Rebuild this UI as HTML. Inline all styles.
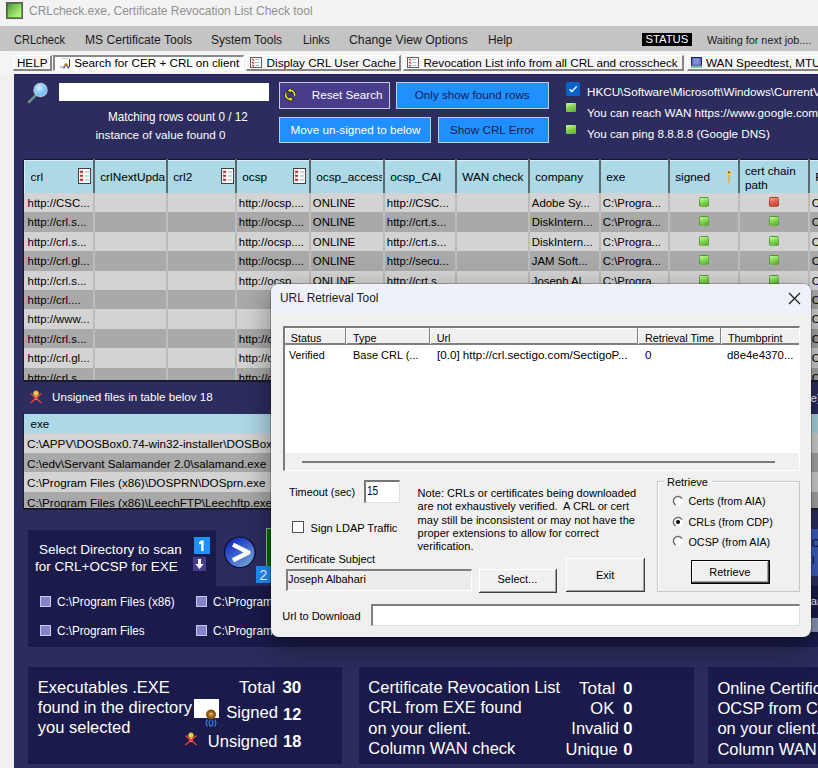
<!DOCTYPE html><html><head><meta charset="utf-8"><style>
html,body{margin:0;padding:0;width:818px;height:768px;overflow:hidden;background:#f0f0f0;position:relative;font-family:"Liberation Sans", sans-serif}
.t{position:absolute;white-space:pre;}
.b{position:absolute;}
</style></head><body>
<div class="b" style="left:0px;top:0px;width:818px;height:26px;background:#f3f3f3"></div>
<div class="b" style="left:6px;top:2px;width:17px;height:17px;background:linear-gradient(135deg,#4a8a38 0%,#7cc858 40%,#a8f070 75%,#b8f880 100%);border:1px solid #5a5a5a;box-shadow:inset 0 0 0 1px rgba(40,80,30,0.5);box-sizing:border-box"></div>
<div class="t" style="left:29.3px;top:5.02px;font-size:12.5px;line-height:12.5px;color:#909090;transform:scaleX(0.9582);transform-origin:0 0;">CRLcheck.exe, Certificate Revocation List Check tool</div>
<div class="b" style="left:0px;top:26px;width:818px;height:25px;background:#c4c4c4"></div>
<div class="t" style="left:14.0px;top:33.84px;font-size:12px;line-height:12px;color:#1a1a1a;transform:scaleX(0.9213);transform-origin:0 0;">CRLcheck</div>
<div class="t" style="left:84.9px;top:33.84px;font-size:12px;line-height:12px;color:#1a1a1a;transform:scaleX(1.0058);transform-origin:0 0;">MS Certificate Tools</div>
<div class="t" style="left:211.4px;top:33.84px;font-size:12px;line-height:12px;color:#1a1a1a;transform:scaleX(0.9995);transform-origin:0 0;">System Tools</div>
<div class="t" style="left:302.8px;top:33.84px;font-size:12px;line-height:12px;color:#1a1a1a;transform:scaleX(0.9531);transform-origin:0 0;">Links</div>
<div class="t" style="left:349.0px;top:33.84px;font-size:12px;line-height:12px;color:#1a1a1a;transform:scaleX(1.0237);transform-origin:0 0;">Change View Options</div>
<div class="t" style="left:488.2px;top:33.84px;font-size:12px;line-height:12px;color:#1a1a1a;transform:scaleX(0.9927);transform-origin:0 0;">Help</div>
<div class="b" style="left:642px;top:33px;width:50px;height:13px;background:#000"></div>
<div class="t" style="left:645.4px;top:34.43px;font-size:11.3px;line-height:11.3px;color:#fff;">STATUS</div>
<div class="t" style="left:706.9px;top:33.78px;font-size:11.6px;line-height:11.6px;color:#1a1a1a;transform:scaleX(0.9342);transform-origin:0 0;">Waiting for next job....</div>
<div class="b" style="left:0px;top:51px;width:818px;height:23px;background:#f4f4f4"></div>
<div class="b" style="left:13px;top:55px;width:39px;height:16px;background:#f6f6f6;border-top:1px solid #fff;border-left:1px solid #fff;border-right:2px solid #858585;border-bottom:2px solid #858585;box-sizing:border-box"></div>
<div class="t" style="left:16.9px;top:56.70px;font-size:11.7px;line-height:11.7px;color:#000;">HELP</div>
<div class="b" style="left:53px;top:55px;width:191px;height:16px;background:#fdfdfd;border-top:2px solid #8a8a8a;border-left:2px solid #8a8a8a;border-right:1px solid #fff;border-bottom:1px solid #fff;box-sizing:border-box"></div>
<div class="t" style="left:74.3px;top:56.70px;font-size:11.7px;line-height:11.7px;color:#000;">Search for CER + CRL on client</div>
<svg class="b" style="left:59px;top:57px" width="12" height="12" viewBox="0 0 12 12"><path d="M1 10h5" stroke="#a0a0a0" stroke-width="1.2"/><path d="M10.5 2v8h-2" fill="none" stroke="#404040" stroke-width="1"/><path d="M3 1.5h6" stroke="#d0d0d0"/><circle cx="7" cy="8" r="1.8" fill="#b07020"/><path d="M5.5 9.5l-0.8 2M8.5 9.5l0.8 2" stroke="#2060d0" stroke-width="1.4"/></svg>
<div class="b" style="left:246px;top:55px;width:155px;height:16px;background:#f6f6f6;border-top:1px solid #fff;border-left:1px solid #fff;border-right:2px solid #858585;border-bottom:2px solid #858585;box-sizing:border-box"></div>
<div class="t" style="left:266.6px;top:56.70px;font-size:11.7px;line-height:11.7px;color:#000;">Display CRL User Cache</div>
<div class="b" style="left:403px;top:55px;width:281px;height:16px;background:#f6f6f6;border-top:1px solid #fff;border-left:1px solid #fff;border-right:2px solid #858585;border-bottom:2px solid #858585;box-sizing:border-box"></div>
<div class="t" style="left:423.4px;top:56.70px;font-size:11.7px;line-height:11.7px;color:#000;">Revocation List info from all CRL and crosscheck</div>
<svg class="b" style="left:250px;top:57px" width="12" height="11" viewBox="0 0 12 11"><rect x="0.5" y="0.5" width="11" height="10" fill="#fff" stroke="#606060"/><path d="M2 2l2 1.5M2 5l2 1.5M2 8l2 1.5" stroke="#e03030" stroke-width="1.4"/><path d="M5.5 2.5h4M5.5 5.5h4M5.5 8.5h4" stroke="#90c0d0"/></svg>
<svg class="b" style="left:407px;top:57px" width="12" height="11" viewBox="0 0 12 11"><rect x="0.5" y="0.5" width="11" height="10" fill="#fff" stroke="#606060"/><path d="M2 2l2 1.5M2 5l2 1.5M2 8l2 1.5" stroke="#e03030" stroke-width="1.4"/><path d="M5.5 2.5h4M5.5 5.5h4M5.5 8.5h4" stroke="#90c0d0"/></svg>
<div class="b" style="left:687px;top:55px;width:143px;height:16px;background:#f6f6f6;border-top:1px solid #fff;border-left:1px solid #fff;border-right:2px solid #858585;border-bottom:2px solid #858585;box-sizing:border-box"></div>
<div class="t" style="left:706.0px;top:56.70px;font-size:11.7px;line-height:11.7px;color:#000;">WAN Speedtest, MTU</div>
<svg class="b" style="left:691px;top:57px" width="11" height="11" viewBox="0 0 11 11"><rect x="0.5" y="0.5" width="10" height="8" fill="#6070c0" stroke="#202060"/><rect x="2.5" y="1.5" width="6" height="6" fill="#8090d0"/><rect x="0" y="8.5" width="11" height="2.5" fill="#80c0b0"/></svg>
<div class="b" style="left:14px;top:73px;width:804px;height:695px;background:#2c2d5e;border-top:1px solid #20205a;box-sizing:border-box;top:73.5px"></div>
<svg class="b" style="left:26px;top:81px" width="24" height="24" viewBox="0 0 24 24"><defs><radialGradient id="mg" cx="0.4" cy="0.35" r="0.7"><stop offset="0" stop-color="#d8f0ff"/><stop offset="0.5" stop-color="#86cdfb"/><stop offset="1" stop-color="#6ab8f0"/></radialGradient></defs><line x1="3" y1="21" x2="10" y2="14" stroke="#6a8a90" stroke-width="2.6" stroke-linecap="round"/><circle cx="14.5" cy="9" r="6.6" fill="url(#mg)" stroke="#b8c8d0" stroke-width="1.2"/></svg>
<div class="b" style="left:59px;top:83px;width:210px;height:18px;background:#fff"></div>
<div class="t" style="left:108.0px;top:111.47px;font-size:12.2px;line-height:12.2px;color:#fff;transform:scaleX(0.9602);transform-origin:0 0;">Matching rows count 0 / 12</div>
<div class="t" style="left:95.5px;top:129.40px;font-size:11.7px;line-height:11.7px;color:#fff;">instance of value found 0</div>
<div class="b" style="left:279px;top:82px;width:111px;height:27px;background:#483d8b;border:1px solid #c8c8e0;box-sizing:border-box"></div>
<div class="t" style="left:311.8px;top:89.40px;font-size:11.7px;line-height:11.7px;color:#fff;">Reset Search</div>
<svg class="b" style="left:284px;top:88px" width="13" height="14" viewBox="0 0 13 14"><path d="M6 2.4A4.5 4.5 0 0 1 10.5 8.4M6.4 11.2A4.5 4.5 0 0 1 1.9 5.2" fill="none" stroke="#101010" stroke-width="3"/><path d="M3.6 2.4L6.9 0.2V4.6zM9 11.2L5.7 9V13.4z" fill="#101010" stroke="#101010" stroke-width="1.2"/><path d="M6 2.4A4.5 4.5 0 0 1 10.5 8.4M6.4 11.2A4.5 4.5 0 0 1 1.9 5.2" fill="none" stroke="#e8e020" stroke-width="1.7"/><path d="M3.6 2.4L6.9 0.2V4.6zM9 11.2L5.7 9V13.4z" fill="#e8e020" stroke="#e8e020" stroke-width="0"/></svg>
<div class="b" style="left:396px;top:82px;width:153px;height:27px;background:#1e90ff;border:1px solid #c8c8e0;box-sizing:border-box"></div>
<div class="t" style="left:414.7px;top:89.40px;font-size:11.7px;line-height:11.7px;color:#1a1a50;">Only show found rows</div>
<div class="b" style="left:279px;top:117px;width:152px;height:26px;background:#1e90ff;border:1px solid #c8c8e0;box-sizing:border-box"></div>
<div class="t" style="left:290.6px;top:124.40px;font-size:11.7px;line-height:11.7px;color:#fff;">Move un-signed to below</div>
<div class="b" style="left:438px;top:117px;width:111px;height:26px;background:#1e90ff;border:1px solid #c8c8e0;box-sizing:border-box"></div>
<div class="t" style="left:450.0px;top:124.40px;font-size:11.7px;line-height:11.7px;color:#1a1a50;">Show CRL Error</div>
<div class="b" style="left:566px;top:82px;width:14px;height:14px;background:#0a64c8;border-radius:2px"></div>
<svg class="b" style="left:566px;top:82px" width="14" height="14" viewBox="0 0 14 14"><path d="M3.5 7.2l2.3 2.3 4.8-5" fill="none" stroke="#fff" stroke-width="1.3"/></svg>
<div class="t" style="left:587.0px;top:86.40px;font-size:11.7px;line-height:11.7px;color:#fff;">HKCU\Software\Microsoft\Windows\CurrentVersion</div>
<div class="b" style="left:566px;top:103px;width:10px;height:9px;background:linear-gradient(160deg,#d0f8a0,#80d050 50%,#60b030);border-radius:1px;box-shadow:0 0 1px rgba(0,0,0,0.4)"></div>
<div class="t" style="left:587.0px;top:107.10px;font-size:11.7px;line-height:11.7px;color:#fff;">You can reach WAN https://www.google.com</div>
<div class="b" style="left:566px;top:125px;width:10px;height:9px;background:linear-gradient(160deg,#d0f8a0,#80d050 50%,#60b030);border-radius:1px;box-shadow:0 0 1px rgba(0,0,0,0.4)"></div>
<div class="t" style="left:587.0px;top:127.70px;font-size:11.7px;line-height:11.7px;color:#fff;">You can ping 8.8.8.8 (Google DNS)</div>
<div class="b" style="left:24px;top:159px;width:794px;height:222px;background:#d3d3d3"></div>
<div class="b" style="left:23px;top:159px;width:795px;height:1px;background:#151535"></div>
<div class="b" style="left:23px;top:159px;width:1px;height:222px;background:#151535"></div>
<div class="b" style="left:24px;top:160px;width:794px;height:33px;background:#add8e6;border-top:1px solid #d8f0f8;border-left:1px solid #d8f0f8;box-sizing:border-box"></div>
<div class="b" style="left:24px;top:212px;width:794px;height:20px;background:#a9a9a9"></div>
<div class="b" style="left:24px;top:251px;width:794px;height:20px;background:#a9a9a9"></div>
<div class="b" style="left:24px;top:290px;width:794px;height:19px;background:#a9a9a9"></div>
<div class="b" style="left:24px;top:329px;width:794px;height:19px;background:#a9a9a9"></div>
<div class="b" style="left:24px;top:368px;width:794px;height:13px;background:#a9a9a9"></div>
<div class="b" style="left:93px;top:159px;width:2px;height:34px;background:#5a6870"></div>
<div class="b" style="left:93px;top:193px;width:2px;height:188px;background:#bcbcbc"></div>
<div class="b" style="left:166px;top:159px;width:2px;height:34px;background:#5a6870"></div>
<div class="b" style="left:166px;top:193px;width:2px;height:188px;background:#bcbcbc"></div>
<div class="b" style="left:235px;top:159px;width:2px;height:34px;background:#5a6870"></div>
<div class="b" style="left:235px;top:193px;width:2px;height:188px;background:#bcbcbc"></div>
<div class="b" style="left:309px;top:159px;width:2px;height:34px;background:#5a6870"></div>
<div class="b" style="left:309px;top:193px;width:2px;height:188px;background:#bcbcbc"></div>
<div class="b" style="left:383px;top:159px;width:2px;height:34px;background:#5a6870"></div>
<div class="b" style="left:383px;top:193px;width:2px;height:188px;background:#bcbcbc"></div>
<div class="b" style="left:455px;top:159px;width:2px;height:34px;background:#5a6870"></div>
<div class="b" style="left:455px;top:193px;width:2px;height:188px;background:#bcbcbc"></div>
<div class="b" style="left:528px;top:159px;width:2px;height:34px;background:#5a6870"></div>
<div class="b" style="left:528px;top:193px;width:2px;height:188px;background:#bcbcbc"></div>
<div class="b" style="left:599px;top:159px;width:2px;height:34px;background:#5a6870"></div>
<div class="b" style="left:599px;top:193px;width:2px;height:188px;background:#bcbcbc"></div>
<div class="b" style="left:668px;top:159px;width:2px;height:34px;background:#5a6870"></div>
<div class="b" style="left:668px;top:193px;width:2px;height:188px;background:#bcbcbc"></div>
<div class="b" style="left:738px;top:159px;width:2px;height:34px;background:#5a6870"></div>
<div class="b" style="left:738px;top:193px;width:2px;height:188px;background:#bcbcbc"></div>
<div class="b" style="left:808px;top:159px;width:2px;height:34px;background:#5a6870"></div>
<div class="b" style="left:808px;top:193px;width:2px;height:188px;background:#bcbcbc"></div>
<div class="b" style="left:23px;top:159px;width:795px;height:34px;overflow:hidden">
<div class="t" style="left:7.600000000000001px;top:12.61px;font-size:11.8px;line-height:11.8px;width:63px;overflow:hidden">crl</div>
<div class="t" style="left:77.2px;top:12.61px;font-size:11.8px;line-height:11.8px;width:65px;overflow:hidden">crlNextUpdate</div>
<div class="t" style="left:150.2px;top:12.61px;font-size:11.8px;line-height:11.8px;width:61px;overflow:hidden">crl2</div>
<div class="t" style="left:219.2px;top:12.61px;font-size:11.8px;line-height:11.8px;width:66px;overflow:hidden">ocsp</div>
<div class="t" style="left:293.2px;top:12.61px;font-size:11.8px;line-height:11.8px;width:66px;overflow:hidden">ocsp_access</div>
<div class="t" style="left:367.2px;top:12.61px;font-size:11.8px;line-height:11.8px;width:64px;overflow:hidden">ocsp_CAI</div>
<div class="t" style="left:439.2px;top:12.61px;font-size:11.8px;line-height:11.8px;width:65px;overflow:hidden">WAN check</div>
<div class="t" style="left:512.2px;top:12.61px;font-size:11.8px;line-height:11.8px;width:63px;overflow:hidden">company</div>
<div class="t" style="left:583.2px;top:12.61px;font-size:11.8px;line-height:11.8px;width:61px;overflow:hidden">exe</div>
<div class="t" style="left:652.2px;top:12.61px;font-size:11.8px;line-height:11.8px;width:62px;overflow:hidden">signed</div>
<div class="t" style="left:722.2px;top:12.61px;font-size:11.8px;line-height:11.8px;width:62px;overflow:hidden"></div>
<div class="t" style="left:792.2px;top:12.61px;font-size:11.8px;line-height:11.8px;width:83px;overflow:hidden">R</div>
</div>
<div class="t" style="left:745.0px;top:164.60px;font-size:11.7px;line-height:11.7px;color:#000;">cert chain</div>
<div class="t" style="left:745.0px;top:178.70px;font-size:11.7px;line-height:11.7px;color:#000;">path</div>
<svg class="b" style="left:78px;top:168px" width="13" height="16" viewBox="0 0 13 16"><rect x="0.5" y="0.5" width="12" height="15" fill="#fff" stroke="#404040"/><path d="M2 3l3 2M5 3l-3 2M2 7l3 2M5 7l-3 2M2 11l3 2M5 11l-3 2" stroke="#c02020" stroke-width="1.3"/><path d="M7 4h4M7 8h4M7 12h4" stroke="#90b0c0"/></svg>
<svg class="b" style="left:221px;top:168px" width="13" height="16" viewBox="0 0 13 16"><rect x="0.5" y="0.5" width="12" height="15" fill="#fff" stroke="#404040"/><path d="M2 3l3 2M5 3l-3 2M2 7l3 2M5 7l-3 2M2 11l3 2M5 11l-3 2" stroke="#c02020" stroke-width="1.3"/><path d="M7 4h4M7 8h4M7 12h4" stroke="#90b0c0"/></svg>
<svg class="b" style="left:293px;top:168px" width="13" height="16" viewBox="0 0 13 16"><rect x="0.5" y="0.5" width="12" height="15" fill="#fff" stroke="#404040"/><path d="M2 3l3 2M5 3l-3 2M2 7l3 2M5 7l-3 2M2 11l3 2M5 11l-3 2" stroke="#c02020" stroke-width="1.3"/><path d="M7 4h4M7 8h4M7 12h4" stroke="#90b0c0"/></svg>
<svg class="b" style="left:726px;top:170px" width="6" height="14" viewBox="0 0 6 14"><circle cx="3" cy="3" r="2.6" fill="#f8c850"/><circle cx="3" cy="2.2" r="1" fill="#605020"/><rect x="2.2" y="5" width="1.6" height="8" fill="#e0b040"/></svg>
<div class="b" style="left:23px;top:193px;width:795px;height:188px;overflow:hidden">
<div class="t" style="left:4.600000000000001px;top:4.55px;font-size:11.4px;line-height:11.4px">http://CSC...</div>
<div class="t" style="left:215.8px;top:4.55px;font-size:11.4px;line-height:11.4px">http://ocsp....</div>
<div class="t" style="left:289.8px;top:4.55px;font-size:11.4px;line-height:11.4px">ONLINE</div>
<div class="t" style="left:363.8px;top:4.55px;font-size:11.4px;line-height:11.4px">http://CSC...</div>
<div class="t" style="left:508.79999999999995px;top:4.55px;font-size:11.4px;line-height:11.4px">Adobe Sy...</div>
<div class="t" style="left:579.8px;top:4.55px;font-size:11.4px;line-height:11.4px">C:\Progra...</div>
<div class="b" style="left:676px;top:4px;width:10px;height:10px;background:linear-gradient(160deg,#c8f8a0,#80d850 50%,#58b030);border:1px solid #40703080;border-radius:2px;box-sizing:border-box"></div>
<div class="b" style="left:746px;top:4px;width:10px;height:10px;background:linear-gradient(160deg,#f0a090,#e06050 50%,#c04030);border:1px solid #80302080;border-radius:2px;box-sizing:border-box"></div>
<div class="t" style="left:788.8px;top:4.55px;font-size:11.4px;line-height:11.4px">C</div>
<div class="t" style="left:4.600000000000001px;top:23.55px;font-size:11.4px;line-height:11.4px">http://crl.s...</div>
<div class="t" style="left:215.8px;top:23.55px;font-size:11.4px;line-height:11.4px">http://ocsp....</div>
<div class="t" style="left:289.8px;top:23.55px;font-size:11.4px;line-height:11.4px">ONLINE</div>
<div class="t" style="left:363.8px;top:23.55px;font-size:11.4px;line-height:11.4px">http://crt.s...</div>
<div class="t" style="left:508.79999999999995px;top:23.55px;font-size:11.4px;line-height:11.4px">DiskIntern...</div>
<div class="t" style="left:579.8px;top:23.55px;font-size:11.4px;line-height:11.4px">C:\Progra...</div>
<div class="b" style="left:676px;top:23px;width:10px;height:10px;background:linear-gradient(160deg,#c8f8a0,#80d850 50%,#58b030);border:1px solid #40703080;border-radius:2px;box-sizing:border-box"></div>
<div class="b" style="left:746px;top:23px;width:10px;height:10px;background:linear-gradient(160deg,#c8f8a0,#80d850 50%,#58b030);border:1px solid #40703080;border-radius:2px;box-sizing:border-box"></div>
<div class="t" style="left:788.8px;top:23.55px;font-size:11.4px;line-height:11.4px">C</div>
<div class="t" style="left:4.600000000000001px;top:43.55px;font-size:11.4px;line-height:11.4px">http://crl.s...</div>
<div class="t" style="left:215.8px;top:43.55px;font-size:11.4px;line-height:11.4px">http://ocsp....</div>
<div class="t" style="left:289.8px;top:43.55px;font-size:11.4px;line-height:11.4px">ONLINE</div>
<div class="t" style="left:363.8px;top:43.55px;font-size:11.4px;line-height:11.4px">http://crt.s...</div>
<div class="t" style="left:508.79999999999995px;top:43.55px;font-size:11.4px;line-height:11.4px">DiskIntern...</div>
<div class="t" style="left:579.8px;top:43.55px;font-size:11.4px;line-height:11.4px">C:\Progra...</div>
<div class="b" style="left:676px;top:43px;width:10px;height:10px;background:linear-gradient(160deg,#c8f8a0,#80d850 50%,#58b030);border:1px solid #40703080;border-radius:2px;box-sizing:border-box"></div>
<div class="b" style="left:746px;top:43px;width:10px;height:10px;background:linear-gradient(160deg,#c8f8a0,#80d850 50%,#58b030);border:1px solid #40703080;border-radius:2px;box-sizing:border-box"></div>
<div class="t" style="left:788.8px;top:43.55px;font-size:11.4px;line-height:11.4px">C</div>
<div class="t" style="left:4.600000000000001px;top:62.55px;font-size:11.4px;line-height:11.4px">http://crl.gl...</div>
<div class="t" style="left:215.8px;top:62.55px;font-size:11.4px;line-height:11.4px">http://ocsp....</div>
<div class="t" style="left:289.8px;top:62.55px;font-size:11.4px;line-height:11.4px">ONLINE</div>
<div class="t" style="left:363.8px;top:62.55px;font-size:11.4px;line-height:11.4px">http://secu...</div>
<div class="t" style="left:508.79999999999995px;top:62.55px;font-size:11.4px;line-height:11.4px">JAM Soft...</div>
<div class="t" style="left:579.8px;top:62.55px;font-size:11.4px;line-height:11.4px">C:\Progra...</div>
<div class="b" style="left:676px;top:62px;width:10px;height:10px;background:linear-gradient(160deg,#c8f8a0,#80d850 50%,#58b030);border:1px solid #40703080;border-radius:2px;box-sizing:border-box"></div>
<div class="b" style="left:746px;top:62px;width:10px;height:10px;background:linear-gradient(160deg,#c8f8a0,#80d850 50%,#58b030);border:1px solid #40703080;border-radius:2px;box-sizing:border-box"></div>
<div class="t" style="left:788.8px;top:62.55px;font-size:11.4px;line-height:11.4px">C</div>
<div class="t" style="left:4.600000000000001px;top:82.55px;font-size:11.4px;line-height:11.4px">http://crl.s...</div>
<div class="t" style="left:215.8px;top:82.55px;font-size:11.4px;line-height:11.4px">http://ocsp....</div>
<div class="t" style="left:289.8px;top:82.55px;font-size:11.4px;line-height:11.4px">ONLINE</div>
<div class="t" style="left:363.8px;top:82.55px;font-size:11.4px;line-height:11.4px">http://crt.s...</div>
<div class="t" style="left:508.79999999999995px;top:82.55px;font-size:11.4px;line-height:11.4px">Joseph Al...</div>
<div class="t" style="left:579.8px;top:82.55px;font-size:11.4px;line-height:11.4px">C:\Progra...</div>
<div class="b" style="left:676px;top:82px;width:10px;height:10px;background:linear-gradient(160deg,#c8f8a0,#80d850 50%,#58b030);border:1px solid #40703080;border-radius:2px;box-sizing:border-box"></div>
<div class="b" style="left:746px;top:82px;width:10px;height:10px;background:linear-gradient(160deg,#c8f8a0,#80d850 50%,#58b030);border:1px solid #40703080;border-radius:2px;box-sizing:border-box"></div>
<div class="t" style="left:788.8px;top:82.55px;font-size:11.4px;line-height:11.4px">C</div>
<div class="t" style="left:4.600000000000001px;top:101.55px;font-size:11.4px;line-height:11.4px">http://crl....</div>
<div class="t" style="left:788.8px;top:101.55px;font-size:11.4px;line-height:11.4px">C</div>
<div class="t" style="left:4.600000000000001px;top:120.55px;font-size:11.4px;line-height:11.4px">http://www...</div>
<div class="t" style="left:788.8px;top:120.55px;font-size:11.4px;line-height:11.4px">C</div>
<div class="t" style="left:4.600000000000001px;top:140.55px;font-size:11.4px;line-height:11.4px">http://crl.s...</div>
<div class="t" style="left:215.8px;top:140.55px;font-size:11.4px;line-height:11.4px">http://ocsp....</div>
<div class="t" style="left:788.8px;top:140.55px;font-size:11.4px;line-height:11.4px">C</div>
<div class="t" style="left:4.600000000000001px;top:159.55px;font-size:11.4px;line-height:11.4px">http://crl.gl...</div>
<div class="t" style="left:215.8px;top:159.55px;font-size:11.4px;line-height:11.4px">http://ocsp....</div>
<div class="t" style="left:788.8px;top:159.55px;font-size:11.4px;line-height:11.4px">C</div>
<div class="t" style="left:4.600000000000001px;top:179.55px;font-size:11.4px;line-height:11.4px">http://crl.s...</div>
<div class="t" style="left:215.8px;top:179.55px;font-size:11.4px;line-height:11.4px">http://ocsp....</div>
<div class="t" style="left:788.8px;top:179.55px;font-size:11.4px;line-height:11.4px">C</div>
</div>
<div class="b" style="left:23px;top:380px;width:795px;height:2px;background:#1a1a30"></div>
<svg class="b" style="left:29px;top:390px" width="14" height="14" viewBox="0 0 14 14"><circle cx="7" cy="3.3" r="2.6" fill="#f0d050" stroke="#c09020" stroke-width="0.6"/><path d="M5.5 6h3v4h-3z" fill="#f0d050"/><path d="M1.5 3.5l11 9.5M12.5 3.5l-11 9.5" stroke="#e84040" stroke-width="1.5"/></svg>
<div class="t" style="left:52.1px;top:391.18px;font-size:11.6px;line-height:11.6px;color:#fff;">Unsigned files in table belov 18</div>
<div class="b" style="left:23px;top:414px;width:795px;height:95px;background:#d3d3d3;border-left:1px solid #1a1a30;box-sizing:border-box"></div>
<div class="b" style="left:24px;top:414px;width:794px;height:19px;background:#add8e6"></div>
<div class="b" style="left:24px;top:453px;width:794px;height:19px;background:#a9a9a9"></div>
<div class="b" style="left:24px;top:492px;width:794px;height:17px;background:#a9a9a9"></div>
<div class="t" style="left:30.5px;top:419.27px;font-size:11.5px;line-height:11.5px;color:#000;">exe</div>
<div class="t" style="left:27.1px;top:438.30px;font-size:11.7px;line-height:11.7px;color:#000;">C:\APPV\DOSBox0.74-win32-installer\DOSBox\DOSBox.exe</div>
<div class="t" style="left:27.1px;top:458.30px;font-size:11.7px;line-height:11.7px;color:#000;">C:\edv\Servant Salamander 2.0\salamand.exe</div>
<div class="t" style="left:27.1px;top:477.30px;font-size:11.7px;line-height:11.7px;color:#000;">C:\Program Files (x86)\DOSPRN\DOSprn.exe</div>
<div class="t" style="left:27.1px;top:497.30px;font-size:11.7px;line-height:11.7px;color:#000;">C:\Program Files (x86)\LeechFTP\Leechftp.exe</div>
<div class="b" style="left:23px;top:508px;width:795px;height:2px;background:#1a1a30"></div>
<div class="b" style="left:28px;top:530px;width:188px;height:56px;background:#1a1b4b"></div>
<div class="b" style="left:28px;top:586px;width:790px;height:61px;background:#1a1b4b"></div>
<div class="t" style="left:39.1px;top:542.97px;font-size:13.5px;line-height:13.5px;color:#fff;">Select Directory to scan</div>
<div class="t" style="left:35.0px;top:560.07px;font-size:13.5px;line-height:13.5px;color:#fff;">for CRL+OCSP for EXE</div>
<div class="b" style="left:194px;top:537px;width:16px;height:17px;background:#1e90ff"></div>
<svg class="b" style="left:194px;top:537px" width="16" height="17" viewBox="0 0 16 17"><path d="M7.2 3.5h2.4v10.6H7.2V6.4L5 7.6V5.2z" fill="#fff"/></svg>
<div class="b" style="left:193px;top:557px;width:13px;height:14px;background:#483d8b"></div>
<svg class="b" style="left:193px;top:557px" width="13" height="14" viewBox="0 0 13 14"><path d="M5 2h3v5h2.5l-4 5-4-5H5z" fill="#fff"/></svg>
<svg class="b" style="left:223px;top:536px" width="34" height="34" viewBox="0 0 34 34"><defs><linearGradient id="cg" x1="0.15" y1="0.1" x2="0.85" y2="0.95"><stop offset="0" stop-color="#1028c0"/><stop offset="0.5" stop-color="#4068d0"/><stop offset="1" stop-color="#78a8e0"/></linearGradient></defs><circle cx="16.8" cy="16.3" r="15.3" fill="url(#cg)" stroke="#0c0c30" stroke-width="1.2"/><path d="M10 8.6l15.5 7.9-15.5 7.8" fill="none" stroke="#fff" stroke-width="4.4" stroke-linejoin="round"/></svg>
<div class="b" style="left:266px;top:528px;width:6px;height:38px;background:#006e00;border-left:1px solid #9ab89a;border-top:1px solid #9ab89a;box-sizing:border-box"></div>
<div class="b" style="left:256px;top:566px;width:16px;height:17px;background:#1e90ff"></div>
<div class="t" style="left:259.5px;top:567.75px;font-size:14px;line-height:14px;color:#fff;">2</div>
<div class="b" style="left:40px;top:596px;width:11px;height:11px;background:#8484c8;border:1px solid #c8c8f0;box-sizing:border-box"></div>
<div class="b" style="left:196px;top:596px;width:11px;height:11px;background:#8484c8;border:1px solid #c8c8f0;box-sizing:border-box"></div>
<div class="b" style="left:40px;top:625px;width:11px;height:11px;background:#8484c8;border:1px solid #c8c8f0;box-sizing:border-box"></div>
<div class="b" style="left:196px;top:625px;width:11px;height:11px;background:#8484c8;border:1px solid #c8c8f0;box-sizing:border-box"></div>
<div class="t" style="left:57.0px;top:596.16px;font-size:12.1px;line-height:12.1px;color:#fff;transform:scaleX(0.9671);transform-origin:0 0;">C:\Program Files (x86)</div>
<div class="t" style="left:213.0px;top:596.16px;font-size:12.1px;line-height:12.1px;color:#fff;transform:scaleX(0.9671);transform-origin:0 0;">C:\Program Files (x86)</div>
<div class="t" style="left:57.0px;top:624.56px;font-size:12.1px;line-height:12.1px;color:#fff;transform:scaleX(0.9662);transform-origin:0 0;">C:\Program Files</div>
<div class="t" style="left:213.0px;top:624.56px;font-size:12.1px;line-height:12.1px;color:#fff;transform:scaleX(0.9662);transform-origin:0 0;">C:\Program Files</div>
<div class="b" style="left:28px;top:667px;width:314px;height:97px;background:#1a1b4b"></div>
<div class="b" style="left:359px;top:667px;width:335px;height:97px;background:#1a1b4b"></div>
<div class="b" style="left:708px;top:667px;width:110px;height:97px;background:#1a1b4b"></div>
<div class="t" style="left:37.8px;top:678.63px;font-size:16.5px;line-height:16.5px;color:#fff;">Executables .EXE</div>
<div class="t" style="left:37.8px;top:698.63px;font-size:16.5px;line-height:16.5px;color:#fff;">found in the directory</div>
<div class="t" style="left:37.8px;top:718.63px;font-size:16.5px;line-height:16.5px;color:#fff;">you selected</div>
<div class="t" style="left:238.9px;top:678.93px;font-size:16.5px;line-height:16.5px;color:#fff;transform:scaleX(1.0415);transform-origin:0 0;">Total</div>
<div class="t" style="left:282.4px;top:678.51px;font-size:17px;line-height:17px;color:#fff;font-weight:bold;">30</div>
<div class="t" style="left:226.2px;top:705.45px;font-size:16.6px;line-height:16.6px;color:#fff;">Signed</div>
<div class="t" style="left:283.1px;top:705.70px;font-size:16.3px;line-height:16.3px;color:#fff;font-weight:bold;">12</div>
<div class="t" style="left:207.8px;top:732.83px;font-size:16.5px;line-height:16.5px;color:#fff;">Unsigned</div>
<div class="t" style="left:283.1px;top:733.00px;font-size:16.3px;line-height:16.3px;color:#fff;font-weight:bold;">18</div>
<div class="b" style="left:194px;top:699px;width:25px;height:19px;background:#fff"></div>
<svg class="b" style="left:204px;top:707px" width="14" height="22" viewBox="0 0 14 22"><path d="M3.5 12.5c-1.5 2-1.5 5 0 7M6 13c-1 2-1 5 1 6.5M10.5 12.5c1.5 2 1.5 5 0 7M8 13c1 2 1 5-1 6.5" fill="none" stroke="#3070e0" stroke-width="1.4"/><circle cx="7" cy="7.5" r="5" fill="#8a5418"/><circle cx="7" cy="7.5" r="2.8" fill="#b07828"/><circle cx="7" cy="7" r="1" fill="#f0d080"/></svg>
<svg class="b" style="left:184px;top:732px" width="14" height="14" viewBox="0 0 14 14"><circle cx="7" cy="3.3" r="2.6" fill="#f0d050" stroke="#c09020" stroke-width="0.6"/><path d="M5.5 6h3v4h-3z" fill="#f0d050"/><path d="M1.5 3.5l11 9.5M12.5 3.5l-11 9.5" stroke="#e84040" stroke-width="1.5"/></svg>
<div class="t" style="left:368.3px;top:679.23px;font-size:16.5px;line-height:16.5px;color:#fff;">Certificate Revocation List</div>
<div class="t" style="left:368.3px;top:699.43px;font-size:16.5px;line-height:16.5px;color:#fff;">CRL from EXE found</div>
<div class="t" style="left:368.3px;top:719.63px;font-size:16.5px;line-height:16.5px;color:#fff;">on your client.</div>
<div class="t" style="left:368.3px;top:739.83px;font-size:16.5px;line-height:16.5px;color:#fff;">Column WAN check</div>
<div class="t" style="left:579.0px;top:679.53px;font-size:16.5px;line-height:16.5px;color:#fff;transform:scaleX(1.0415);transform-origin:0 0;">Total</div>
<div class="t" style="left:623.3px;top:679.53px;font-size:16.5px;line-height:16.5px;color:#fff;font-weight:bold;">0</div>
<div class="t" style="left:590.3px;top:699.93px;font-size:16.5px;line-height:16.5px;color:#fff;">OK</div>
<div class="t" style="left:623.3px;top:699.93px;font-size:16.5px;line-height:16.5px;color:#fff;font-weight:bold;">0</div>
<div class="t" style="left:571.3px;top:720.33px;font-size:16.5px;line-height:16.5px;color:#fff;">Invalid</div>
<div class="t" style="left:623.3px;top:720.33px;font-size:16.5px;line-height:16.5px;color:#fff;font-weight:bold;">0</div>
<div class="t" style="left:565.5px;top:740.73px;font-size:16.5px;line-height:16.5px;color:#fff;">Unique</div>
<div class="t" style="left:623.3px;top:740.73px;font-size:16.5px;line-height:16.5px;color:#fff;font-weight:bold;">0</div>
<div class="t" style="left:717.4px;top:679.53px;font-size:16.5px;line-height:16.5px;color:#fff;">Online Certificate Status</div>
<div class="t" style="left:717.4px;top:699.93px;font-size:16.5px;line-height:16.5px;color:#fff;">OCSP from CRL found</div>
<div class="t" style="left:717.4px;top:720.33px;font-size:16.5px;line-height:16.5px;color:#fff;">on your client.</div>
<div class="t" style="left:717.4px;top:740.73px;font-size:16.5px;line-height:16.5px;color:#fff;">Column WAN check</div>
<div class="t" style="left:810.5px;top:392.40px;font-size:11.7px;line-height:11.7px;color:#fff;">e)</div>
<div class="b" style="left:811px;top:529px;width:7px;height:47px;background:#3f5fc0"></div>
<div class="t" style="left:811.5px;top:537.10px;font-size:11.7px;line-height:11.7px;color:#101040;">C</div>
<div class="t" style="left:812.0px;top:554.10px;font-size:11.7px;line-height:11.7px;color:#101040;">l</div>
<div class="t" style="left:810.5px;top:594.60px;font-size:11.7px;line-height:11.7px;color:#fff;">ar</div>
<div class="b" style="left:811px;top:618px;width:7px;height:14px;background:#8898b8"></div>
<div class="b" style="left:271px;top:284px;width:540px;height:353px;background:#f0f0f0;border-radius:8px;box-shadow:0 0 0 1px rgba(0,0,0,0.22),0 10px 30px rgba(0,0,0,0.42);overflow:hidden"></div>
<div class="b" style="left:271px;top:284px;width:540px;height:30px;background:#eef1f8;border-radius:8px 8px 0 0"></div>
<div class="t" style="left:279.8px;top:292.40px;font-size:12.4px;line-height:12.4px;color:#1a1a1a;transform:scaleX(0.9592);transform-origin:0 0;">URL Retrieval Tool</div>
<svg class="b" style="left:788px;top:292px" width="13" height="13" viewBox="0 0 13 13"><path d="M1 1l11 11M12 1L1 12" stroke="#1a1a1a" stroke-width="1.2"/></svg>
<div class="b" style="left:283px;top:326px;width:517px;height:145px;background:#fff;border-top:2px solid #7a7a7a;border-left:2px solid #7a7a7a;border-bottom:1px solid #fff;border-right:1px solid #fff;box-sizing:border-box"></div>
<div class="b" style="left:285px;top:328px;width:514px;height:17px;background:#f0f0f0;border-bottom:2px solid #808080;box-shadow:inset 1px 1px 0 #fff;box-sizing:border-box"></div>
<div class="b" style="left:345px;top:328px;width:1px;height:16px;background:#808080"></div>
<div class="b" style="left:346px;top:328px;width:1px;height:16px;background:#fff"></div>
<div class="b" style="left:428.5px;top:328px;width:1px;height:16px;background:#808080"></div>
<div class="b" style="left:429.5px;top:328px;width:1px;height:16px;background:#fff"></div>
<div class="b" style="left:637px;top:328px;width:1px;height:16px;background:#808080"></div>
<div class="b" style="left:638px;top:328px;width:1px;height:16px;background:#fff"></div>
<div class="b" style="left:720px;top:328px;width:1px;height:16px;background:#808080"></div>
<div class="b" style="left:721px;top:328px;width:1px;height:16px;background:#fff"></div>
<div class="t" style="left:290.8px;top:332.86px;font-size:10.8px;line-height:10.8px;color:#000;">Status</div>
<div class="t" style="left:353.0px;top:332.86px;font-size:10.8px;line-height:10.8px;color:#000;">Type</div>
<div class="t" style="left:436.7px;top:332.86px;font-size:10.8px;line-height:10.8px;color:#000;">Url</div>
<div class="t" style="left:645.0px;top:332.86px;font-size:10.8px;line-height:10.8px;color:#000;">Retrieval Time</div>
<div class="t" style="left:728.0px;top:332.86px;font-size:10.8px;line-height:10.8px;color:#000;">Thumbprint</div>
<div class="t" style="left:288.9px;top:349.82px;font-size:11.2px;line-height:11.2px;color:#000;transform:scaleX(0.9530);transform-origin:0 0;">Verified</div>
<div class="t" style="left:353.0px;top:349.82px;font-size:11.2px;line-height:11.2px;color:#000;transform:scaleX(0.9819);transform-origin:0 0;">Base CRL (...</div>
<div class="t" style="left:436.7px;top:349.82px;font-size:11.2px;line-height:11.2px;color:#000;transform:scaleX(1.0401);transform-origin:0 0;">[0.0] http://crl.sectigo.com/SectigoP...</div>
<div class="t" style="left:645.0px;top:349.82px;font-size:11.2px;line-height:11.2px;color:#000;transform:scaleX(1.0435);transform-origin:0 0;">0</div>
<div class="t" style="left:727.0px;top:349.82px;font-size:11.2px;line-height:11.2px;color:#000;transform:scaleX(1.0169);transform-origin:0 0;">d8e4e4370...</div>
<div class="b" style="left:285px;top:453px;width:514px;height:17px;background:#f0f0f0"></div>
<div class="b" style="left:302px;top:460.5px;width:473px;height:2.0px;background:#7a7a7a"></div>
<div class="t" style="left:288.9px;top:486.77px;font-size:10.9px;line-height:10.9px;color:#000;">Timeout (sec)</div>
<div class="b" style="left:364px;top:480px;width:36px;height:23px;background:#fff;border-top:2px solid #787878;border-left:2px solid #787878;border-bottom:1px solid #e0e0e0;border-right:1px solid #e0e0e0;box-sizing:border-box"></div>
<div class="t" style="left:367.3px;top:484.93px;font-size:12.6px;line-height:12.6px;color:#000;transform:scaleX(0.7991);transform-origin:0 0;">15</div>
<div class="t" style="left:417.6px;top:487.65px;font-size:11.05px;line-height:11.05px;color:#000;">Note: CRLs or certificates being downloaded</div>
<div class="t" style="left:417.6px;top:501.10px;font-size:11.05px;line-height:11.05px;color:#000;">are not exhaustively verified.  A CRL or cert</div>
<div class="t" style="left:417.6px;top:514.55px;font-size:11.05px;line-height:11.05px;color:#000;">may still be inconsistent or may not have the</div>
<div class="t" style="left:417.6px;top:528.00px;font-size:11.05px;line-height:11.05px;color:#000;">proper extensions to allow for correct</div>
<div class="t" style="left:417.6px;top:541.45px;font-size:11.05px;line-height:11.05px;color:#000;">verification.</div>
<div class="b" style="left:292px;top:521px;width:12px;height:12px;background:#fff;border:1px solid #505050;box-sizing:border-box"></div>
<div class="t" style="left:310.6px;top:523.05px;font-size:11.05px;line-height:11.05px;color:#000;">Sign LDAP Traffic</div>
<div class="t" style="left:285.9px;top:554.19px;font-size:11px;line-height:11px;color:#000;">Certificate Subject</div>
<div class="b" style="left:286px;top:569px;width:186px;height:22px;background:#ececec;border-top:2px solid #808080;border-left:2px solid #808080;border-bottom:1px solid #fff;border-right:1px solid #fff;box-sizing:border-box"></div>
<div class="t" style="left:288.0px;top:573.73px;font-size:10.95px;line-height:10.95px;color:#000;">Joseph Albahari</div>
<div class="b" style="left:479px;top:569px;width:78px;height:24px;background:#f0f0f0;box-shadow:inset -1px -1px 0 #404040,inset 1px 1px 0 #fff,inset -2px -2px 0 #a0a0a0;box-sizing:border-box"></div>
<div class="t" style="left:497.5px;top:573.69px;font-size:11px;line-height:11px;color:#000;">Select...</div>
<div class="b" style="left:566px;top:558px;width:79px;height:34px;background:#f0f0f0;box-shadow:inset -1px -1px 0 #404040,inset 1px 1px 0 #fff,inset -2px -2px 0 #a0a0a0;box-sizing:border-box"></div>
<div class="t" style="left:596.0px;top:570.09px;font-size:11px;line-height:11px;color:#000;">Exit</div>
<div class="b" style="left:657px;top:481px;width:143px;height:111px;border:1px solid #c8c8c8;box-shadow:inset 1px 1px 0 #fff;box-sizing:border-box"></div>
<div class="b" style="left:664px;top:478px;width:48px;height:12px;background:#f0f0f0"></div>
<div class="t" style="left:667.0px;top:476.99px;font-size:11px;line-height:11px;color:#000;">Retrieve</div>
<svg class="b" style="left:672px;top:495.0px" width="12" height="12" viewBox="0 0 12 12"><circle cx="6" cy="6" r="5" fill="#fff"/><path d="M3.7 9.98A4.6 4.6 0 1 1 9.98 3.7" fill="none" stroke="#707070" stroke-width="1.5"/></svg>
<div class="t" style="left:688.5px;top:496.40px;font-size:10.75px;line-height:10.75px;color:#000;">Certs (from AIA)</div>
<svg class="b" style="left:672px;top:515.6px" width="12" height="12" viewBox="0 0 12 12"><circle cx="6" cy="6" r="5" fill="#fff"/><path d="M3.7 9.98A4.6 4.6 0 1 1 9.98 3.7" fill="none" stroke="#707070" stroke-width="1.5"/><circle cx='6' cy='6' r='2' fill='#000'/></svg>
<div class="t" style="left:688.5px;top:517.20px;font-size:10.75px;line-height:10.75px;color:#000;">CRLs (from CDP)</div>
<svg class="b" style="left:672px;top:535.2px" width="12" height="12" viewBox="0 0 12 12"><circle cx="6" cy="6" r="5" fill="#fff"/><path d="M3.7 9.98A4.6 4.6 0 1 1 9.98 3.7" fill="none" stroke="#707070" stroke-width="1.5"/></svg>
<div class="t" style="left:688.5px;top:536.90px;font-size:10.75px;line-height:10.75px;color:#000;">OCSP (from AIA)</div>
<div class="b" style="left:691px;top:560px;width:79px;height:24px;background:#f0f0f0;border:1px solid #000;box-shadow:inset -1px -1px 0 #404040,inset 1px 1px 0 #fff,inset -2px -2px 0 #a0a0a0;box-sizing:border-box"></div>
<div class="t" style="left:709.3px;top:566.69px;font-size:11px;line-height:11px;color:#000;">Retrieve</div>
<div class="t" style="left:282.3px;top:611.29px;font-size:11px;line-height:11px;color:#000;">Url to Download</div>
<div class="b" style="left:371px;top:604px;width:429px;height:22px;background:#fff;border-top:2px solid #808080;border-left:2px solid #808080;border-bottom:1px solid #e0e0e0;border-right:1px solid #e0e0e0;box-sizing:border-box"></div>
</body></html>
